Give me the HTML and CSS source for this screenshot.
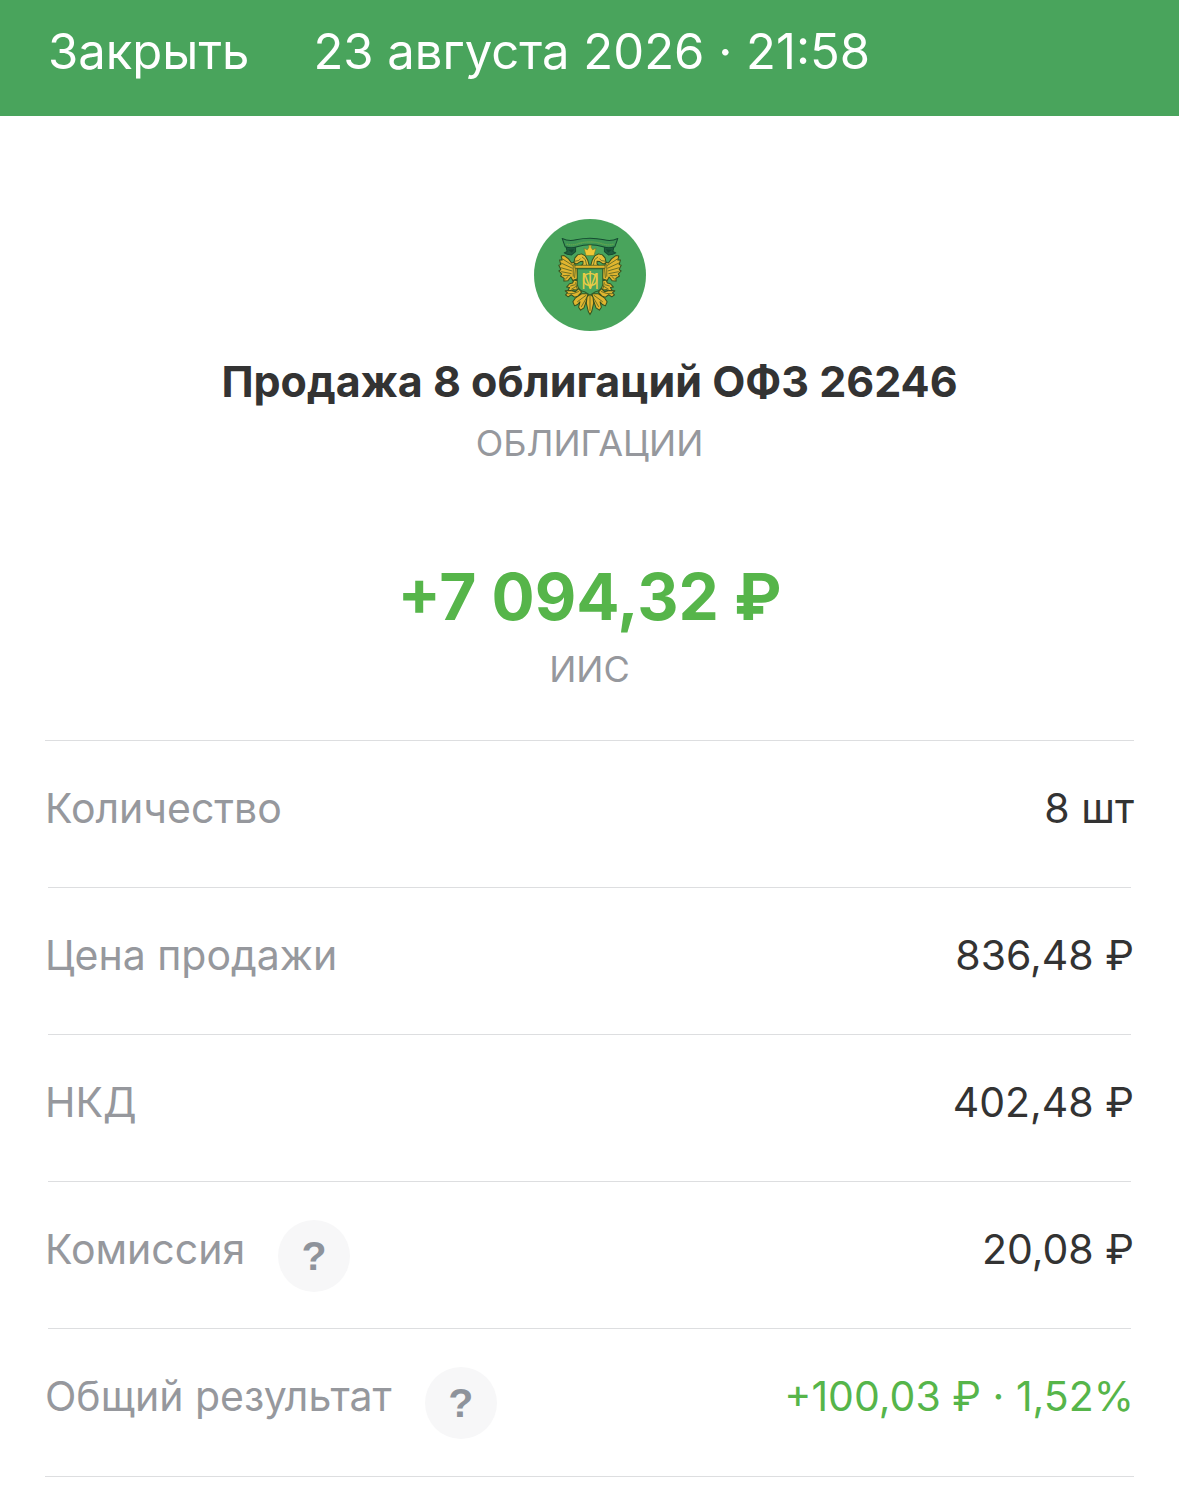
FILE: index.html
```html
<!DOCTYPE html>
<html lang="ru">
<head>
  <meta charset="utf-8">
  <title>Продажа 8 облигаций ОФЗ 26246</title>
  <meta name="viewport" content="width=device-width, initial-scale=1">
  <link rel="stylesheet" href="styles.css">
</head>
<body>
  <header class="topbar">
    <button type="button" class="close">Закрыть</button>
    <time class="date" datetime="2026-08-23T21:58">23 августа 2026 · 21:58</time>
  </header>

  <main>
    <section class="summary">
      <svg class="logo" viewBox="27 27 334 334" aria-hidden="true">
        <defs>
          <g id="half" stroke="#36501f" stroke-width="3" stroke-linejoin="round">
            <!-- wing -->
            <path fill="#e0b52f" d="M152 170 L146 156 L139 158 L130 146 L117 136 L108 137 L111 149 L103 149 L107 163 L101 165 L107 178 L101 182 L110 191 L106 197 L117 204 L116 212 L128 211 L137 200 L143 211 L157 205 L156 176 Z"/>
            <path fill="none" stroke-width="2" d="M112 146 L143 166 M107 158 L142 174 M106 172 L141 182 M108 184 L139 190 M113 196 L135 195 M120 207 L130 197 M144 161 L144 199 M151 170 L148 203"/>
            <!-- head -->
            <path fill="#e6be39" d="M187 170 L164 170 L173 161 L173 153 L165 154 L155 161 L146 157 L149 143 L157 134 L169 131 L180 137 L187 149 L193 170 Z"/>
            <path fill="none" stroke-width="2" d="M148 153 L160 151 L166 145 M170 140 L180 148 L184 165"/>
            <!-- claw -->
            <path fill="#e0b52f" d="M146 209 L157 211 L165 229 L154 239 L143 238 L137 246 L128 240 L133 231 L124 230 L133 220 L142 218 Z"/>
            <path fill="none" stroke-width="2" d="M135 227 L149 223 M138 237 L154 227 M151 216 L155 235"/>
            <path fill="#e0b52f" d="M160 235 L169 245 L158 257 L148 260 L138 253 L129 259 L121 253 L127 247 L120 241 L137 240 L150 244 Z"/>
            <path fill="none" stroke-width="2" d="M128 250 L145 249 L161 243"/>
            <!-- tail feathers -->
            <path fill="#e0b52f" d="M188 250 L169 250 L151 262 L143 274 L148 286 L157 282 L164 274 L160 290 L166 299 L176 292 L185 266 Z"/>
            <path fill="none" stroke-width="2" d="M183 254 L156 274 M186 258 L168 289"/>
          </g>
        </defs>
        <circle cx="194" cy="194" r="167" fill="#49a45c"/>
        <!-- ribbon -->
        <g fill="#3d9555" stroke="#164b32" stroke-width="3" stroke-linejoin="round">
          <path fill="#1f6140" d="M121 103 L126 124 L117 128 L126 132 L139 134 L151 124 L151 111 Z M267 103 L262 124 L271 128 L262 132 L249 134 L237 124 L237 111 Z"/>
          <path d="M111 85 Q130 94 152 89 Q194 80 236 89 Q258 94 277 85 L268 110 Q250 116 233 110 Q194 98 155 110 Q138 116 120 110 Z"/>
          <path fill="none" stroke="#68a84e" stroke-width="4" stroke-dasharray="4 2" d="M124 102 Q142 107 160 100 Q194 91 228 100 Q246 107 264 102"/>
        </g>
        <path fill="#164b32" d="M128 119 L147 117 L140 128 Z M260 119 L241 117 L248 128 Z"/>
        <use href="#half"/>
        <use href="#half" transform="matrix(-1 0 0 1 388 0)"/>
        <path fill="#e0b52f" stroke="#36501f" stroke-width="3" d="M194 248 L185 260 L183 278 L189 303 L194 312 L199 303 L205 278 L203 260 Z"/>
        <path fill="none" stroke="#36501f" stroke-width="2" d="M194 253 L194 301"/>
        <!-- crown -->
        <path fill="#efc635" stroke="#71802b" stroke-width="2" d="M182 136 L176 114 L186 119 L191 111 L190 105 L198 105 L197 111 L202 119 L212 114 L206 136 Z"/>
        <!-- shield -->
        <path fill="#e0b52f" stroke="#36501f" stroke-width="2" d="M149 165 L239 165 L239 174 L149 174 Z"/>
        <path fill="#49a45c" stroke="#315b2a" stroke-width="3" d="M156 175 L232 175 L232 222 Q229 241 210 244 L194 254 L178 244 Q159 241 156 222 Z"/>
        <g class="monogram">
          <text x="194" y="235">М</text>
          <text x="194" y="229">Ф</text>
        </g>
      </svg>
      <h1 class="title">Продажа 8 облигаций ОФЗ 26246</h1>
      <p class="note">ОБЛИГАЦИИ</p>
      <p class="amount">+7 094,32 ₽</p>
      <p class="note">ИИС</p>
    </section>

    <dl class="details">
      <div class="row">
        <dt>Количество</dt>
        <dd>8 шт</dd>
      </div>
      <div class="row">
        <dt>Цена продажи</dt>
        <dd>836,48 ₽</dd>
      </div>
      <div class="row">
        <dt>НКД</dt>
        <dd>402,48 ₽</dd>
      </div>
      <div class="row">
        <dt>Комиссия</dt>
        <dd class="help-cell"><button type="button" class="help">?</button></dd>
        <dd>20,08 ₽</dd>
      </div>
      <div class="row">
        <dt>Общий результат</dt>
        <dd class="help-cell"><button type="button" class="help">?</button></dd>
        <dd class="profit">+100,03 ₽ · 1,52%</dd>
      </div>
    </dl>
  </main>
</body>
</html>
```
FILE: styles.css
```css
* { box-sizing: border-box; }
body { margin: 0; background: #fff; color: #333; font-family: Inter, "Liberation Sans", sans-serif; }
h1, p, dl, dd { margin: 0; }
button { border: none; padding: 0; font-family: inherit; cursor: pointer; }

.topbar { display: flex; align-items: center; gap: 64px; padding: 20px 48px 32px; background: #49a45c; color: #fff; font-size: 49px; line-height: 64px; }
.close { background: none; color: inherit; font-size: inherit; line-height: inherit; }

.summary { display: flex; flex-direction: column; align-items: center; padding: 103px 45px 47px; text-align: center; }
.logo { width: 112px; height: 112px; }
.monogram { fill: #e8cc45; font-size: 62px; font-weight: 300; text-anchor: middle; }
.title { margin-top: 24px; font-size: 43px; line-height: 52px; font-weight: 700; }
.note { margin-top: 12px; color: #96989d; font-size: 36px; line-height: 48px; }
.amount { margin-top: 94px; color: #56b54a; font-size: 64px; line-height: 72px; font-weight: 700; }

.details { margin: 0 45px; border-top: 1px solid #dddee0; border-bottom: 1px solid #dddee0; font-size: 41px; line-height: 52px; }
/* inner dividers are a bit shorter than the outer ones */
.row { display: flex; align-items: center; height: 147px; background: linear-gradient(#dddee0, #dddee0) bottom / calc(100% - 6px) 1px no-repeat; }
.row:last-child { background: none; }
.row dt { padding-bottom: 14px; color: #96989d; }
.row dd { margin-left: auto; padding-bottom: 14px; }
.row .help-cell { margin-left: 33px; padding: 0; }
.row .profit { color: #56b54a; }
.help { display: block; width: 72px; height: 72px; border-radius: 50%; background: #f7f7f8; color: #8e939b; font-family: "Liberation Sans", sans-serif; font-size: 41px; line-height: 72px; font-weight: 700; }
```
